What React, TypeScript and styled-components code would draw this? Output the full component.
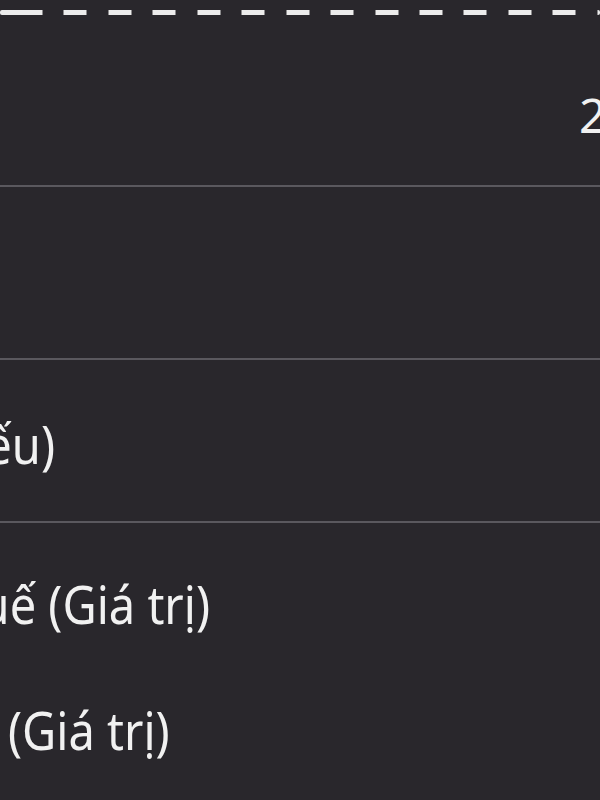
import React from 'react';
import styled, {createGlobalStyle} from 'styled-components';

const GlobalStyle = createGlobalStyle`
    html, body {
        margin: 0;
        padding: 0;
        background: #29272c;
        overflow: hidden;
    }
    body {
        font-family: "Noto Sans", "Open Sans", sans-serif;
        color: #f1f1f1;
    }
`;

const Sheet = styled.div`
    width: 600px;
    height: 800px;
    overflow: hidden;
    background: #29272c;
    display: flex;
    flex-direction: column;
`;

const DashStrip = styled.div`
    height: 24px;
    display: flex;
    align-items: center;
    flex-shrink: 0;
`;

const Dashes = styled.div`
    width: 100%;
    height: 5px;
    border-radius: 2px;
    background-image: repeating-linear-gradient(
        to right,
        #ececec 0 23px,
        transparent 23px 44.44px
    );
    background-position: 19.5px 0;
`;

const Row = styled.div<{ $height: number; $padTop: number; $last?: boolean }>`
    box-sizing: border-box;
    height: ${p => p.$height}px;
    padding-top: ${p => p.$padTop}px;
    border-bottom: ${p => (p.$last ? 'none' : '2px solid #5a585e')};
    display: flex;
    flex-direction: column;
    gap: 62px;
    flex-shrink: 0;
`;

const ValueLine = styled.div`
    display: grid;
    grid-template-columns: 579px auto;
`;

// the labels in the picture are set a little taller than wide
const Label = styled.div<{ $end: number }>`
    width: ${p => p.$end}px;
    display: flex;
    justify-content: flex-end;
    white-space: nowrap;
    font-size: 47px;
    line-height: normal;
    transform: scaleY(1.12);
    transform-origin: center;
`;

const WrapLabel = styled.div`
    padding-left: 8px;
    white-space: nowrap;
    font-size: 47px;
    line-height: normal;
    transform: scaleY(1.12);
    transform-origin: center;
`;

const Value = styled.span`
    font-size: 48px;
    line-height: normal;
    white-space: nowrap;
`;

const App = () => {
    return (
        <Sheet>
            <GlobalStyle/>
            <DashStrip>
                <Dashes/>
            </DashStrip>
            <Row $height={163} $padTop={58}>
                <ValueLine>
                    <span/>
                    <Value>2</Value>
                </ValueLine>
            </Row>
            <Row $height={173} $padTop={0}/>
            <Row $height={163} $padTop={52}>
                <Label $end={55}>Số hóa đơn (Số phiếu)</Label>
            </Row>
            <Row $height={300} $padTop={49} $last>
                <Label $end={210}>Tiền thuế (Giá trị)</Label>
                <WrapLabel>(Giá trị)</WrapLabel>
            </Row>
        </Sheet>
    );
};

export default App;
